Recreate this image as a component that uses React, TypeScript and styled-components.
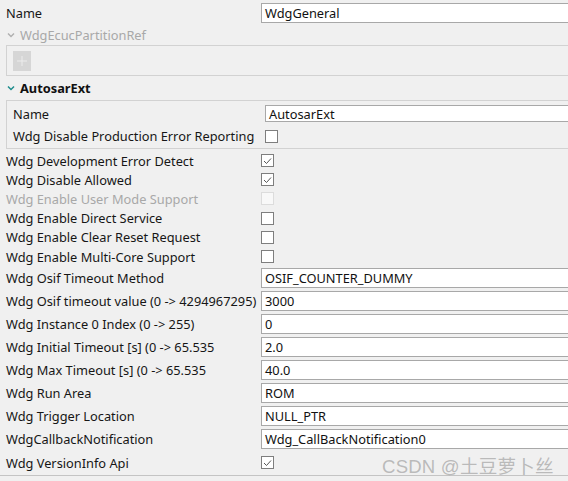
import React from "react";
import styled, { createGlobalStyle } from "styled-components";

const Global = createGlobalStyle`
  html, body { margin: 0; padding: 0; background: #f0f0f0; overflow: hidden; }
  body { font-family: "Noto Sans", "Noto Sans CJK SC", sans-serif; font-size: 12.8px; color: #161616; }
`;

const Page = styled.div`
  width: 100%;
  height: 481px;
  position: relative;
  overflow: hidden;
  background: #f0f0f0;
`;

const Row = styled.div<{ $h: number; $col: number }>`
  display: grid;
  grid-template-columns: ${(p) => p.$col}px 1fr;
  align-items: center;
  height: ${(p) => p.$h}px;
`;

const Label = styled.span<{ $disabled?: boolean }>`
  white-space: nowrap;
  color: ${(p) => (p.$disabled ? "#a8a8a8" : "#161616")};
  line-height: 16px;
`;

const Input = styled.div<{ $h?: number }>`
  box-sizing: border-box;
  height: ${(p) => p.$h ?? 20}px;
  background: #fff;
  border: 1px solid #a8a8a8;
  border-right: none;
  padding: 0 3px;
  display: flex;
  align-items: center;
  color: #111;
  white-space: nowrap;
`;

const Check = styled.div<{ $disabled?: boolean }>`
  box-sizing: border-box;
  width: 13px;
  height: 13px;
  background: ${(p) => (p.$disabled ? "#f8f8f8" : "#fff")};
  border: 1px solid ${(p) => (p.$disabled ? "#dcdcdc" : "#7e7e7e")};
  display: flex;
  align-items: center;
  justify-content: center;
`;

const Header = styled.div<{ $disabled?: boolean; $bold?: boolean; $h: number }>`
  display: flex;
  align-items: center;
  gap: 5px;
  height: ${(p) => p.$h}px;
  padding-left: 7px;
  color: ${(p) => (p.$disabled ? "#a8a8a8" : "#111")};
  font-weight: ${(p) => (p.$bold ? 700 : 400)};
`;

const Group = styled.div<{ $pt: number; $pb: number }>`
  margin-left: 6px;
  border: 1px solid #d2d2d2;
  border-right: none;
  padding: ${(p) => p.$pt}px 0 ${(p) => p.$pb}px 6px;
`;

const AddButton = styled.div`
  width: 18px;
  height: 20px;
  background: #d6d6d6;
  display: flex;
  align-items: center;
  justify-content: center;
`;

const Body = styled.div`
  padding-left: 6px;
  padding-top: 2px;
`;

const Footer = styled.div`
  border-top: 1px solid #c4c4c4;
`;

const Watermark = styled.div`
  position: absolute;
  left: 382px;
  top: 451px;
  font-family: "Liberation Sans", "Noto Sans CJK SC", sans-serif;
  font-size: 18.6px;
  color: rgba(140, 140, 140, 0.55);
  letter-spacing: 0.2px;
  white-space: nowrap;
`;

const Chevron = ({ color }: { color: string }) => (
  <svg width="8" height="6" viewBox="0 0 8 6">
    <path d="M1 1.5 L4 4.5 L7 1.5" fill="none" stroke={color} strokeWidth="1.5" />
  </svg>
);

const Tick = () => (
  <svg width="9" height="8" viewBox="0 0 9 8">
    <path d="M1 4 L3.5 6.5 L8 1.5" fill="none" stroke="#555" strokeWidth="1" />
  </svg>
);

type Item =
  | { kind: "check"; label: string; checked?: boolean; disabled?: boolean }
  | { kind: "text"; label: string; value: string };

const items: Item[] = [
  { kind: "check", label: "Wdg Development Error Detect", checked: true },
  { kind: "check", label: "Wdg Disable Allowed", checked: true },
  { kind: "check", label: "Wdg Enable User Mode Support", disabled: true },
  { kind: "check", label: "Wdg Enable Direct Service" },
  { kind: "check", label: "Wdg Enable Clear Reset Request" },
  { kind: "check", label: "Wdg Enable Multi-Core Support" },
  { kind: "text", label: "Wdg Osif Timeout Method", value: "OSIF_COUNTER_DUMMY" },
  { kind: "text", label: "Wdg Osif timeout value (0 -> 4294967295)", value: "3000" },
  { kind: "text", label: "Wdg Instance 0 Index (0 -> 255)", value: "0" },
  { kind: "text", label: "Wdg Initial Timeout [s] (0 -> 65.535", value: "2.0" },
  { kind: "text", label: "Wdg Max Timeout [s] (0 -> 65.535", value: "40.0" },
  { kind: "text", label: "Wdg Run Area", value: "ROM" },
  { kind: "text", label: "Wdg Trigger Location", value: "NULL_PTR" },
  { kind: "text", label: "WdgCallbackNotification", value: "Wdg_CallBackNotification0" },
];

export default function App() {
  return (
    <Page>
      <Global />
      <Row $h={25} $col={255} style={{ paddingLeft: 6 }}>
        <Label>Name</Label>
        <Input>WdgGeneral</Input>
      </Row>
      <Header $h={20} $disabled>
        <Chevron color="#b0b0b0" />
        WdgEcucPartitionRef
      </Header>
      <Group $pt={5} $pb={4}>
        <AddButton>
          <svg width="10" height="10" viewBox="0 0 10 10">
            <path d="M5 0 V10 M0 5 H10" stroke="#ececec" strokeWidth="1" />
          </svg>
        </AddButton>
      </Group>
      <Header $h={24} $bold>
        <Chevron color="#1e8c8c" />
        AutosarExt
      </Header>
      <Group $pt={1} $pb={1}>
        <Row $h={23} $col={252}>
          <Label>Name</Label>
          <Input $h={17}>AutosarExt</Input>
        </Row>
        <Row $h={22} $col={252}>
          <Label>Wdg Disable Production Error Reporting</Label>
          <Check />
        </Row>
      </Group>
      <Body>
        {items.map((it) =>
          it.kind === "check" ? (
            <Row key={it.label} $h={19.2} $col={255}>
              <Label $disabled={it.disabled}>{it.label}</Label>
              <Check $disabled={it.disabled}>{it.checked && <Tick />}</Check>
            </Row>
          ) : (
            <Row key={it.label} $h={23} $col={255}>
              <Label>{it.label}</Label>
              <Input>{it.value}</Input>
            </Row>
          )
        )}
        <Row $h={25} $col={255}>
          <Label>Wdg VersionInfo Api</Label>
          <Check>
            <Tick />
          </Check>
        </Row>
      </Body>
      <Footer />
      <Watermark>CSDN @土豆萝卜丝</Watermark>
    </Page>
  );
}
